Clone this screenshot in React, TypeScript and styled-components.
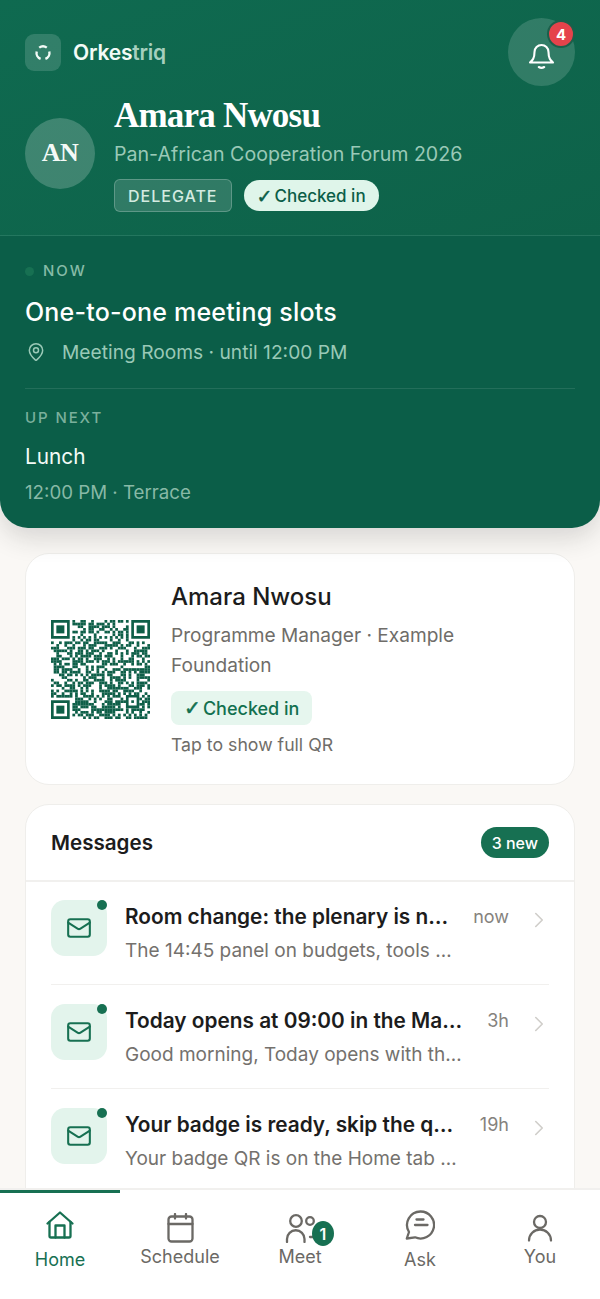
import React from "react";
import styled, { createGlobalStyle } from "styled-components";
import { ChevronRight, Mail, MapPin } from "lucide-react";

const sans = `"Inter", "Noto Sans", sans-serif`;
const serif = `"Liberation Serif", "DejaVu Serif", serif`;

const GlobalStyle = createGlobalStyle`
  html, body {
    margin: 0;
    padding: 0;
    background: #faf8f5;
  }
  body {
    font-family: ${sans};
  }
  * {
    box-sizing: border-box;
  }
`;

const Screen = styled.div`
  position: relative;
  display: flex;
  flex-direction: column;
  width: 600px;
  height: 1299px;
  overflow: hidden;
  background: #faf8f5;
`;

const Hero = styled.section`
  position: relative;
  z-index: 1;
  flex: none;
  height: 528px;
  border-radius: 0 0 28px 28px;
  background: #0b5e48;
  box-shadow: 0 10px 26px rgba(40, 40, 40, 0.16);
  overflow: hidden;
`;

const HeroTop = styled.header`
  height: 236px;
  padding: 18px 25px 0;
  background: linear-gradient(160deg, #0f6a50, #0e6249);
  border-bottom: 1px solid rgba(255, 255, 255, 0.09);
`;

const TopBar = styled.div`
  display: flex;
  justify-content: space-between;
  align-items: flex-start;
`;

const Brand = styled.div`
  display: flex;
  align-items: center;
  gap: 12px;
  margin-top: 16px;
`;

const BrandMark = styled.div`
  display: flex;
  align-items: center;
  justify-content: center;
  width: 36px;
  height: 37px;
  border-radius: 9px;
  background: rgba(255, 255, 255, 0.15);
`;

const BrandName = styled.div`
  font-size: 21px;
  font-weight: 600;
  letter-spacing: -0.2px;
  color: #f3fbf7;
  span {
    color: #a5cfbe;
  }
`;

const BellButton = styled.div`
  position: relative;
  display: flex;
  align-items: center;
  justify-content: center;
  width: 67px;
  height: 68px;
  padding-top: 5px;
  border-radius: 50%;
  background: rgba(255, 255, 255, 0.15);
  color: #fff;
`;

const BellBadge = styled.div`
  position: absolute;
  top: 2px;
  right: 0;
  display: flex;
  align-items: center;
  justify-content: center;
  width: 28px;
  height: 28px;
  border-radius: 50%;
  background: #e5434b;
  border: 2px solid #1c5f4b;
  color: #fff;
  font-size: 15px;
  font-weight: 700;
`;

const Identity = styled.div`
  display: flex;
  align-items: center;
  gap: 19px;
  margin-top: 8px;
`;

const Avatar = styled.div`
  display: flex;
  align-items: center;
  justify-content: center;
  flex: none;
  width: 70px;
  height: 71px;
  border-radius: 50%;
  background: rgba(255, 255, 255, 0.2);
  font-family: ${serif};
  font-weight: 700;
  font-size: 26px;
  letter-spacing: -0.5px;
  color: #f4faf7;
`;

const HeroName = styled.h1`
  margin: 0;
  font-family: ${serif};
  font-size: 35px;
  line-height: 44px;
  font-weight: 700;
  letter-spacing: -0.8px;
  color: #fff;
`;

const EventName = styled.div`
  margin-top: 3px;
  font-size: 19.6px;
  line-height: 26px;
  font-weight: 400;
  color: #9ac9b7;
`;

const Badges = styled.div`
  display: flex;
  align-items: center;
  gap: 12px;
  margin-top: 12px;
`;

const RoleTag = styled.div`
  display: flex;
  align-items: center;
  height: 33px;
  padding: 0 13px;
  border: 1px solid rgba(255, 255, 255, 0.22);
  border-radius: 6px;
  background: rgba(255, 255, 255, 0.14);
  font-size: 16px;
  font-weight: 500;
  letter-spacing: 1px;
  color: #d4ebe1;
`;

const CheckedPill = styled.div`
  display: flex;
  align-items: center;
  gap: 2px;
  height: 31px;
  padding: 0 13px;
  border-radius: 16px;
  background: #dff5ea;
  font-size: 17px;
  font-weight: 500;
  color: #0b5e48;
`;

const Tick = styled.span`
  font-family: "DejaVu Sans", sans-serif;
  font-size: 1.12em;
  font-weight: 700;
  -webkit-text-stroke: 0.5px currentColor;
`;

const HeroBody = styled.div`
  padding: 0 25px;
`;

const NowLabel = styled.div`
  display: flex;
  align-items: center;
  gap: 9px;
  margin-top: 25px;
  font-size: 15px;
  line-height: 20px;
  font-weight: 500;
  letter-spacing: 2px;
  color: #86bba7;
  &::before {
    content: "";
    width: 9px;
    height: 9px;
    border-radius: 50%;
    background: #177052;
  }
`;

const NowTitle = styled.div`
  margin-top: 16px;
  font-size: 25px;
  line-height: 30px;
  font-weight: 500;
  letter-spacing: 0.2px;
  color: #fff;
`;

const Place = styled.div`
  display: flex;
  align-items: center;
  gap: 16px;
  margin-top: 10px;
  padding-left: 1px;
  font-size: 19.2px;
  line-height: 30px;
  color: #9ac9b7;
`;

const HeroRule = styled.div`
  height: 1px;
  margin-top: 21px;
  background: rgba(255, 255, 255, 0.1);
`;

const NextLabel = styled.div`
  margin-top: 19px;
  font-size: 15px;
  line-height: 20px;
  font-weight: 500;
  letter-spacing: 1.9px;
  color: #7ab09c;
`;

const NextTitle = styled.div`
  margin-top: 14px;
  font-size: 20.8px;
  line-height: 30px;
  color: #f3fbf7;
`;

const NextMeta = styled.div`
  margin-top: 6px;
  font-size: 18.7px;
  line-height: 30px;
  color: #88b9a6;
`;

const Content = styled.main`
  flex: 1;
  min-height: 0;
  overflow: hidden;
  padding: 25px 25px 0;
`;

const Card = styled.section`
  background: #fff;
  border: 1px solid #efeeeb;
  border-radius: 24px;
`;

const BadgeCard = styled(Card)`
  display: flex;
  align-items: flex-start;
  gap: 21px;
  height: 232px;
  padding: 25px;
`;

const QrBox = styled.div`
  flex: none;
  width: 99px;
  margin-top: 41px;
`;

const BadgeName = styled.div`
  font-size: 24px;
  line-height: 36px;
  font-weight: 500;
  color: #1c1c1c;
`;

const BadgeRole = styled.div`
  margin-top: 5px;
  font-size: 19.1px;
  line-height: 30px;
  color: #6f6d69;
`;

const BadgeChecked = styled.div`
  display: inline-flex;
  align-items: center;
  gap: 2px;
  height: 34px;
  margin-top: 11px;
  padding: 0 13px;
  border-radius: 8px;
  background: #e6f6ee;
  font-size: 18px;
  font-weight: 500;
  color: #12704f;
`;

const BadgeHint = styled.div`
  margin-top: 7px;
  font-size: 17.7px;
  line-height: 26px;
  color: #6f6d69;
`;

const MessagesCard = styled(Card)`
  margin-top: 19px;
  height: 500px;
`;

const MessagesHead = styled.div`
  display: flex;
  align-items: center;
  justify-content: space-between;
  height: 77px;
  padding: 0 25px;
  border-bottom: 2px solid #f1f0ee;
`;

const MessagesTitle = styled.h2`
  margin: 0;
  font-size: 20.6px;
  font-weight: 600;
  color: #1c1c1c;
`;

const NewPill = styled.div`
  display: flex;
  align-items: center;
  height: 31px;
  padding: 0 11px;
  border-radius: 16px;
  background: #177052;
  font-size: 16px;
  font-weight: 500;
  color: #fff;
`;

const MessageList = styled.div`
  padding: 0 25px;
`;

const Row = styled.div`
  display: flex;
  align-items: flex-start;
  height: 103px;
  margin-bottom: 1px;
  padding-top: 18px;
  border-bottom: 1px solid #f1f0ee;
`;

const MailIcon = styled.div`
  position: relative;
  display: flex;
  align-items: center;
  justify-content: center;
  flex: none;
  width: 56px;
  height: 56px;
  border-radius: 14px;
  background: #e3f4ec;
  color: #177052;
  &::after {
    content: "";
    position: absolute;
    top: 0;
    right: 0;
    width: 10px;
    height: 10px;
    border-radius: 50%;
    background: #177052;
  }
`;

const RowText = styled.div`
  flex: 1;
  min-width: 0;
  margin-left: 18px;
`;

const RowTop = styled.div`
  display: flex;
  align-items: center;
  justify-content: space-between;
  height: 33px;
`;

const RowTitle = styled.div`
  white-space: nowrap;
  font-size: 20.8px;
  font-weight: 600;
  color: #1c1c1c;
`;

const RowTime = styled.div`
  flex: none;
  font-size: 18px;
  color: #85827d;
`;

const RowSnippet = styled.div`
  margin-top: 3px;
  white-space: nowrap;
  font-size: 19px;
  line-height: 30px;
  color: #74716d;
`;

const RowChevron = styled.div`
  display: flex;
  flex: none;
  justify-content: flex-end;
  width: 43px;
  margin-right: -3px;
  padding-top: 7px;
  color: #d0ceca;
`;

const BottomNav = styled.nav`
  position: absolute;
  left: 0;
  right: 0;
  bottom: 0;
  z-index: 2;
  display: grid;
  grid-template-columns: repeat(5, 1fr);
  height: 111px;
  background: #fff;
  border-top: 2px solid #f1f0ee;
`;

const NavItem = styled.div<{ $active?: boolean; $raised?: boolean }>`
  position: relative;
  display: flex;
  flex-direction: column;
  align-items: center;
  gap: ${p => (p.$raised ? "8px" : "2px")};
  padding-top: ${p => (p.$raised ? "17px" : "20px")};
  border-top: 3px solid ${p => (p.$active ? "#177052" : "transparent")};
  color: ${p => (p.$active ? "#177052" : "#6b6965")};
  font-size: 18px;
  line-height: 24px;
`;

const NavGlyph = styled.div`
  display: flex;
  align-items: center;
  justify-content: center;
  height: 30px;
`;

const MeetBadge = styled.div`
  position: absolute;
  top: 28px;
  left: 72px;
  display: flex;
  align-items: center;
  justify-content: center;
  width: 22px;
  height: 25px;
  border-radius: 50%;
  background: #177052;
  color: #fff;
  font-size: 16px;
  font-weight: 600;
`;

// pseudo-random modules around the three finder squares, version 5 grid
const QR_SIZE = 37;
const inFinder = (x: number, y: number) =>
  (x < 8 && y < 8) || (x >= QR_SIZE - 8 && y < 8) || (x < 8 && y >= QR_SIZE - 8);
const inAlign = (x: number, y: number) => x >= 28 && x <= 32 && y >= 28 && y <= 32;

const qrModules = () => {
  const cells: [number, number][] = [];
  let seed = 20260;
  for (let y = 0; y < QR_SIZE; y++) {
    for (let x = 0; x < QR_SIZE; x++) {
      seed = (seed * 1103515245 + 12345) & 0x7fffffff;
      if (inFinder(x, y) || inAlign(x, y)) continue;
      const on = x === 6 || y === 6 ? (x + y) % 2 === 0 : (seed >> 16) % 100 < 55;
      if (on) cells.push([x, y]);
    }
  }
  return cells;
};

const Finder = ({ x, y }: { x: number; y: number }) => (
  <g fill="#0e5f48">
    <path d={`M${x} ${y}h7v7h-7zM${x + 1} ${y + 1}v5h5v-5z`} fillRule="evenodd" />
    <rect x={x + 2} y={y + 2} width={3} height={3} />
  </g>
);

const QrCode = () => (
  <svg width="99" height="99" viewBox="0 0 37 37">
    <Finder x={0} y={0} />
    <Finder x={30} y={0} />
    <Finder x={0} y={30} />
    <path d="M28 28h5v5h-5zM29 29v3h3v-3z" fillRule="evenodd" fill="#0e5f48" />
    <rect x={30} y={30} width={1} height={1} fill="#0e5f48" />
    {qrModules().map(([x, y]) => (
      <rect key={`${x}-${y}`} x={x} y={y} width={1.02} height={1.02} fill="#0e5f48" />
    ))}
  </svg>
);

const LogoRing = () => (
  <svg width="18" height="18" viewBox="0 0 18 18" fill="none" stroke="#f3fbf7" strokeWidth="2.4">
    <path d="M5.2 3.6a6.4 6.4 0 0 1 7.6 0" />
    <path d="M15.3 7.5a6.4 6.4 0 0 1-3.9 7.4" />
    <path d="M6.6 14.9a6.4 6.4 0 0 1-3.9-7.4" />
  </svg>
);

const BellGlyph = () => (
  <svg width="27" height="28" viewBox="0 0 27 28" fill="none" stroke="currentColor" strokeWidth="2.1" strokeLinecap="round" strokeLinejoin="round">
    <path d="M2 21.5c2.6-2.4 4.5-4.3 4.5-10.5a7 7 0 0 1 14 0c0 6.2 1.9 8.1 4.5 10.5z" />
    <path d="M10.8 26c1.6 1 3.8 1 5.4 0" />
  </svg>
);

const HomeGlyph = () => (
  <svg width="30" height="30" viewBox="0 0 30 30" fill="none" stroke="currentColor" strokeWidth="2.3" strokeLinecap="round" strokeLinejoin="round">
    <path d="M2.5 13.5 15 2.5l12.5 11" />
    <path d="M4.5 12v14a1.5 1.5 0 0 0 1.5 1.5h18a1.5 1.5 0 0 0 1.5-1.5V12" />
    <path d="M10.5 27.5V15.5h9v12" />
  </svg>
);

const CalendarGlyph = () => (
  <svg width="27" height="30" viewBox="0 0 27 30" fill="none" stroke="currentColor" strokeWidth="2.3" strokeLinecap="round">
    <rect x="1.5" y="3.5" width="24" height="25" rx="3" />
    <path d="M1.5 11h24M8 1v4.5M19 1v4.5" />
  </svg>
);

const PeopleGlyph = () => (
  <svg width="30" height="30" viewBox="0 0 30 30" fill="none" stroke="currentColor" strokeWidth="2.3" strokeLinecap="round">
    <circle cx="11" cy="8" r="5.8" />
    <circle cx="25" cy="8" r="3.8" />
    <path d="M2 29v-3a8.5 8.5 0 0 1 17.5 0v3" />
    <path d="M25 24h3" />
  </svg>
);

const ChatGlyph = () => (
  <svg width="30" height="30" viewBox="0 0 30 30" fill="none" stroke="currentColor" strokeWidth="2.3" strokeLinecap="round" strokeLinejoin="round">
    <path d="M15.5 1.5a13.5 13.5 0 1 1-5.5 25.8L1.8 28.5l2.2-6.5A13.5 13.5 0 0 1 15.5 1.500z" />
    <path d="M11.5 9.5h7M10 15h12.5" />
  </svg>
);

const UserGlyph = () => (
  <svg width="26" height="30" viewBox="0 0 26 30" fill="none" stroke="currentColor" strokeWidth="2.3" strokeLinecap="round">
    <circle cx="13" cy="9" r="6" />
    <path d="M2 27.5a11 11 0 0 1 22 0" />
  </svg>
);

const messages = [
  { title: "Room change: the plenary is n…", time: "now", snippet: "The 14:45 panel on budgets, tools …" },
  { title: "Today opens at 09:00 in the Ma…", time: "3h", snippet: "Good morning, Today opens with th…" },
  { title: "Your badge is ready, skip the q…", time: "19h", snippet: "Your badge QR is on the Home tab …" },
];

const App = () => (
  <Screen>
    <GlobalStyle />
    <Hero>
      <HeroTop>
        <TopBar>
          <Brand>
            <BrandMark>
              <LogoRing />
            </BrandMark>
            <BrandName>
              Orkes<span>triq</span>
            </BrandName>
          </Brand>
          <BellButton>
            <BellGlyph />
            <BellBadge>4</BellBadge>
          </BellButton>
        </TopBar>
        <Identity>
          <Avatar>AN</Avatar>
          <div>
            <HeroName>Amara Nwosu</HeroName>
            <EventName>Pan-African Cooperation Forum 2026</EventName>
            <Badges>
              <RoleTag>DELEGATE</RoleTag>
              <CheckedPill>
                <Tick>✓</Tick>Checked in
              </CheckedPill>
            </Badges>
          </div>
        </Identity>
      </HeroTop>
      <HeroBody>
        <NowLabel>NOW</NowLabel>
        <NowTitle>One-to-one meeting slots</NowTitle>
        <Place>
          <MapPin size={20} strokeWidth={1.8} />
          Meeting Rooms · until 12:00 PM
        </Place>
        <HeroRule />
        <NextLabel>UP NEXT</NextLabel>
        <NextTitle>Lunch</NextTitle>
        <NextMeta>12:00 PM · Terrace</NextMeta>
      </HeroBody>
    </Hero>
    <Content>
      <BadgeCard>
        <QrBox>
          <QrCode />
        </QrBox>
        <div>
          <BadgeName>Amara Nwosu</BadgeName>
          <BadgeRole>Programme Manager · Example Foundation</BadgeRole>
          <BadgeChecked>
            <Tick>✓</Tick>Checked in
          </BadgeChecked>
          <BadgeHint>Tap to show full QR</BadgeHint>
        </div>
      </BadgeCard>
      <MessagesCard>
        <MessagesHead>
          <MessagesTitle>Messages</MessagesTitle>
          <NewPill>3 new</NewPill>
        </MessagesHead>
        <MessageList>
          {messages.map(m => (
            <Row key={m.title}>
              <MailIcon>
                <Mail size={26} strokeWidth={1.9} />
              </MailIcon>
              <RowText>
                <RowTop>
                  <RowTitle>{m.title}</RowTitle>
                  <RowTime>{m.time}</RowTime>
                </RowTop>
                <RowSnippet>{m.snippet}</RowSnippet>
              </RowText>
              <RowChevron>
                <ChevronRight size={26} strokeWidth={1.5} />
              </RowChevron>
            </Row>
          ))}
        </MessageList>
      </MessagesCard>
    </Content>
    <BottomNav>
      <NavItem $active $raised>
        <NavGlyph>
          <HomeGlyph />
        </NavGlyph>
        Home
      </NavItem>
      <NavItem>
        <NavGlyph>
          <CalendarGlyph />
        </NavGlyph>
        Schedule
      </NavItem>
      <NavItem>
        <NavGlyph>
          <PeopleGlyph />
        </NavGlyph>
        Meet
        <MeetBadge>1</MeetBadge>
      </NavItem>
      <NavItem $raised>
        <NavGlyph>
          <ChatGlyph />
        </NavGlyph>
        Ask
      </NavItem>
      <NavItem>
        <NavGlyph>
          <UserGlyph />
        </NavGlyph>
        You
      </NavItem>
    </BottomNav>
  </Screen>
);

export default App;
